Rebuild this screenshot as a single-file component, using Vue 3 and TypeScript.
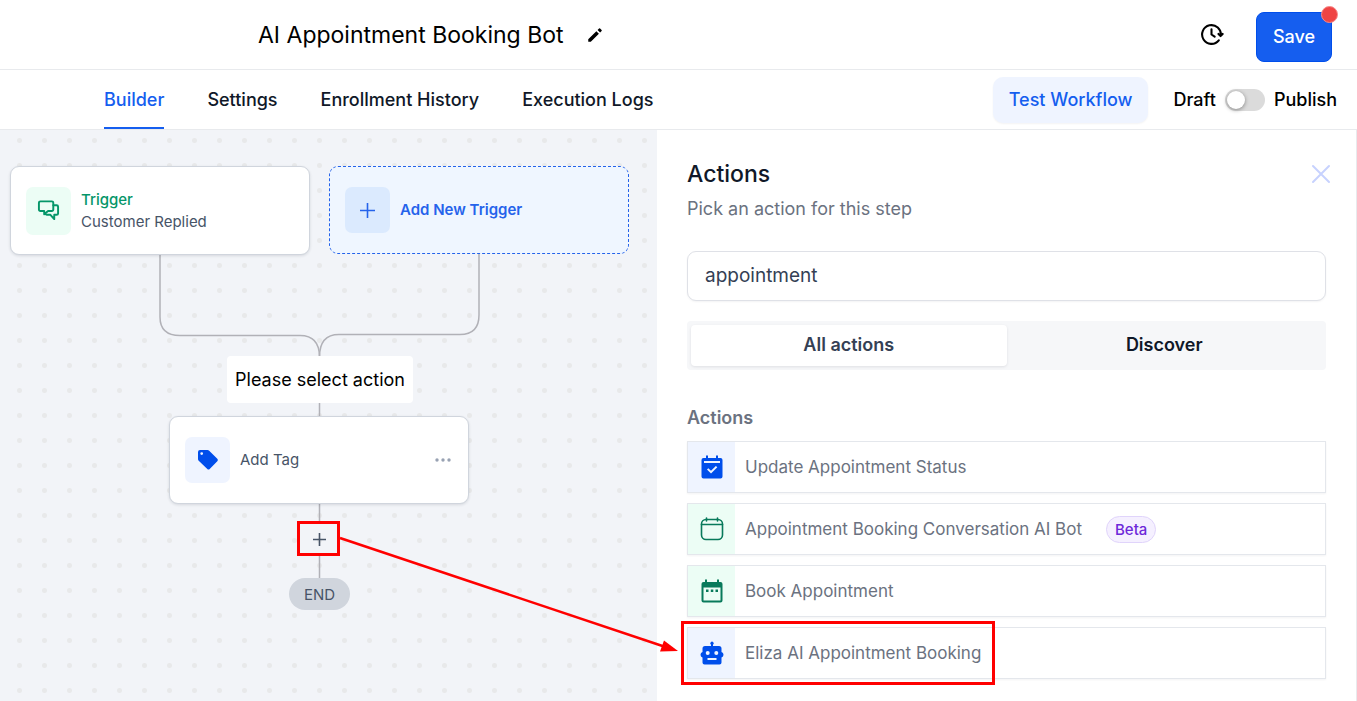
<script setup lang="ts">
import { ref } from 'vue'

type IconName = 'check' | 'outline' | 'dates' | 'robot'
interface ActionItem {
  label: string
  icon: IconName
  tone: 'blue' | 'green'
  beta?: boolean
}

const tabs = ['Builder', 'Settings', 'Enrollment History', 'Execution Logs']
const activeTab = ref('Builder')
const published = ref(false)
const query = ref('appointment')
const scope = ref('All actions')
const scopes = ['All actions', 'Discover']

const actions: ActionItem[] = [
  { label: 'Update Appointment Status', icon: 'check', tone: 'blue' },
  { label: 'Appointment Booking Conversation AI Bot', icon: 'outline', tone: 'green', beta: true },
  { label: 'Book Appointment', icon: 'dates', tone: 'green' },
  { label: 'Eliza AI Appointment Booking', icon: 'robot', tone: 'blue' },
]
</script>

<template>
  <div class="app">
    <header class="topbar">
      <div class="title-group">
        <h1>AI Appointment Booking Bot</h1>
        <button class="icon-btn" aria-label="Rename workflow">
          <svg width="18" height="18" viewBox="0 0 24 24"><path d="M3 17.600V21h3.400L17.200 10.300l-3.400-3.400L3 17.600zM20.800 6.600a1 1 0 0 0 0-1.400l-2-2a1 1 0 0 0-1.400 0l-2 2 3.400 3.400z" /></svg>
        </button>
      </div>
      <div class="top-actions">
        <button class="icon-btn" aria-label="Version history">
          <svg width="25" height="25" viewBox="0 0 24 24" fill="none" stroke="#000" stroke-width="2" stroke-linecap="round" stroke-linejoin="round">
            <path d="M22.700 11.500l-2 2-2-2M20.945 13A9 9 0 1 0 19 17.657M12 7v5l3 2" />
          </svg>
        </button>
        <button class="save">Save<span class="dot"></span></button>
      </div>
    </header>

    <div class="subbar">
      <nav class="tabs" aria-label="Workflow">
        <a v-for="t in tabs" :key="t" href="#" :class="{ active: t === activeTab }" @click.prevent="activeTab = t">{{ t }}</a>
      </nav>
      <div class="publish">
        <button class="test">Test Workflow</button>
        <label class="switch">
          <span>Draft</span>
          <input v-model="published" type="checkbox" role="switch" />
          <span>Publish</span>
        </label>
      </div>
    </div>

    <main class="workspace">
      <section class="canvas" aria-label="Workflow canvas">
        <svg class="edges" width="657" height="480" fill="none" stroke="#b1b1b7" stroke-width="1.5">
          <path d="M160 125V187Q160 205.5 180 205.5H300Q319.5 205.5 319.5 227" />
          <path d="M479 124V185Q479 204.500 460 204.500H339Q319.500 204.500 319.500 227" />
          <path d="M319.500 272V287M319.500 373V392M319.500 425V449" />
        </svg>

        <article class="node trigger">
          <span class="tile green">
            <svg width="23" height="23" viewBox="0 0 24 24" fill="none" stroke="#059669" stroke-width="2" stroke-linejoin="round" stroke-linecap="round">
              <path d="M3.500 2.500h12a1.500 1.500 0 0 1 1.500 1.500v7a1.500 1.500 0 0 1-1.500 1.500h-4L7.500 16v-3.500h-4A1.500 1.500 0 0 1 2 11V4a1.500 1.500 0 0 1 1.500-1.500z" />
              <path d="M17 6.500h3.500A1.500 1.500 0 0 1 22 8v7a1.500 1.500 0 0 1-1.500 1.500H18V21l-4-4.500h-3.500l-2.200-1" />
            </svg>
          </span>
          <div class="node-text"><strong>Trigger</strong><span>Customer Replied</span></div>
        </article>

        <button class="node add-trigger">
          <span class="tile sky">
            <svg width="15" height="15" viewBox="0 0 15 15" stroke="#2563eb" stroke-width="1.600"><path d="M7.500 0v15M0 7.500h15" /></svg>
          </span>
          Add New Trigger
        </button>

        <div class="hint">Please select action</div>

        <article class="node add-tag">
          <span class="tile blue">
            <svg width="24" height="24" viewBox="0 0 24 24" fill="#004eeb"><path fill-rule="evenodd" d="M4 2h7.500q1 0 1.700.7l8.100 8.100q1.300 1.200 0 2.400l-7.600 7.700q-1.200 1.200-2.400 0L2.700 12.700Q2 12 2 11V4q0-2 2-2zm1.700 2.200a1.400 1.400 0 1 0 0 2.800 1.400 1.400 0 0 0 0-2.800z" /></svg>
          </span>
          <span class="node-name">Add Tag</span>
          <button class="more" aria-label="More options">
            <svg width="16" height="4" viewBox="0 0 16 4" fill="#98a2b3"><circle cx="2" cy="2" r="1.700" /><circle cx="8" cy="2" r="1.700" /><circle cx="14" cy="2" r="1.700" /></svg>
          </button>
        </article>

        <button class="insert" aria-label="Add step">
          <svg width="13" height="13" viewBox="0 0 13 13" stroke="#475467" stroke-width="1.600"><path d="M6.500 0v13M0 6.500h13" /></svg>
        </button>
        <div class="end">END</div>
      </section>

      <aside class="panel">
        <div class="panel-head">
          <h2>Actions</h2>
          <button class="icon-btn" aria-label="Close panel">
            <svg width="20" height="20" viewBox="0 0 20 20" stroke="#c7d2fe" stroke-width="2" stroke-linecap="round"><path d="M2 2l16 16M18 2L2 18" /></svg>
          </button>
        </div>
        <p class="lead">Pick an action for this step</p>
        <input v-model="query" class="search" type="text" aria-label="Search actions" />
        <div class="segmented">
          <button v-for="s in scopes" :key="s" :class="{ selected: s === scope }" @click="scope = s">{{ s }}</button>
        </div>
        <h3>Actions</h3>
        <ul class="list">
          <li v-for="a in actions" :key="a.label">
            <button class="action">
              <span class="action-icon" :class="a.tone">
                <svg v-if="a.icon === 'check'" width="24" height="26" viewBox="0 0 24 26" fill="#004eeb">
                  <path fill-rule="evenodd" d="M6 1.500h2V4h8V1.500h2V4h2.500q2 0 2 2v16.500q0 2-2 2h-17q-2 0-2-2V6q0-2 2-2H6zM4 7v2h16V7zM8.300 14.200L7 15.600l4 4 6.300-6.300-1.400-1.400-4.900 4.900z" />
                </svg>
                <svg v-else-if="a.icon === 'outline'" width="24" height="26" viewBox="0 0 24 26" fill="none" stroke="#087a5b" stroke-width="1.600" stroke-linecap="round">
                  <rect x="1.500" y="3.500" width="21" height="20" rx="4.500" /><path d="M1.500 8.500h21M6.500 2v3M17.500 2v3" />
                </svg>
                <svg v-else-if="a.icon === 'dates'" width="24" height="26" viewBox="0 0 24 26" fill="#087a5b">
                  <path fill-rule="evenodd" d="M5 1.500h2V4h10V1.500h2V4h1.500q2 0 2 2v16.500q0 2-2 2h-17q-2 0-2-2V6q0-2 2-2H5zM3.500 9.500v13h17v-13zM6 11.500h2.500V14H6zM10.800 11.500h2.500V14h-2.500zM15.500 11.500H18V14h-2.500z" />
                </svg>
                <svg v-else width="24" height="26" viewBox="0 0 24 26" fill="#004eeb">
                  <path fill-rule="evenodd" d="M11 6V4.800a1.700 1.700 0 1 1 2 0V6h6q2.500 0 2.500 2.500V12q2 .5 2 2.700t-2 2.700v5.100q0 2-2 2h-15q-2 0-2-2v-5.100q-2-.5-2-2.700t2-2.700V8.500Q2.500 6 5 6zM7.700 11a2 2 0 1 0 0 4 2 2 0 0 0 0-4zM16.300 11a2 2 0 1 0 0 4 2 2 0 0 0 0-4zM7.500 18v2h9v-2z" />
                </svg>
              </span>
              <span class="action-name">{{ a.label }}</span>
              <span v-if="a.beta" class="beta">Beta</span>
            </button>
          </li>
        </ul>
      </aside>

      <svg class="callout" width="1000" height="571" fill="none" stroke="#f00" stroke-width="3" aria-hidden="true">
        <rect x="298.500" y="392.500" width="40" height="32" />
        <rect x="682.500" y="492.500" width="311" height="61" />
        <path d="M340 408L664 516.500" stroke-width="2.500" />
        <path d="M678 521L660 521.500L664 510.500Z" fill="#f00" stroke="none" />
      </svg>
    </main>
  </div>
</template>

<style>
body {
  margin: 0;
}
</style>

<style scoped>
* {
  box-sizing: border-box;
}
.app {
  min-height: 100vh;
  display: flex;
  flex-direction: column;
  font-family: Inter, "Liberation Sans", sans-serif;
  color: #000;
  background: #fff;
}
button {
  font: inherit;
  color: inherit;
  border: 0;
  padding: 0;
  background: none;
  cursor: pointer;
}
h1, h2, h3, p, ul {
  margin: 0;
  padding: 0;
}
svg {
  display: block;
}
.topbar {
  height: 70px;
  display: flex;
  justify-content: space-between;
  border-bottom: 1px solid #e8eaed;
  padding: 0 25px 0 258px;
}
.title-group {
  display: flex;
  align-items: center;
  gap: 22px;
}
h1 {
  font-size: 23px;
  line-height: 30px;
  font-weight: 400;
}
.top-actions {
  display: flex;
  align-items: center;
  gap: 32px;
}
.save {
  position: relative;
  width: 76px;
  height: 50px;
  margin-top: 4px;
  border-radius: 8px;
  border: 1px solid #004eeb;
  background: #155eef;
  color: #fff;
  font-size: 18px;
  font-weight: 500;
}
.dot {
  position: absolute;
  top: -7px;
  right: -7px;
  width: 17px;
  height: 17px;
  border-radius: 50%;
  background: #ef4444;
  border: 1px solid #f78a8a;
}
.subbar {
  height: 60px;
  display: flex;
  justify-content: space-between;
  border-bottom: 1px solid #e8eaed;
  padding: 0 20px 0 104px;
  font-size: 18px;
  font-weight: 500;
}
.tabs {
  display: flex;
  gap: 43px;
}
.tabs a {
  display: flex;
  align-items: center;
  color: #101828;
  text-decoration: none;
  border-bottom: 2px solid transparent;
  padding-top: 2px;
}
.tabs a.active {
  color: #155eef;
  border-color: #155eef;
}
.publish,
.switch {
  display: flex;
  align-items: center;
}
.publish {
  gap: 25px;
}
.switch {
  gap: 9px;
}
.test {
  height: 46px;
  padding: 0 16px;
  border-radius: 10px;
  background: #eff4ff;
  color: #155eef;
  box-shadow: 0 1px 2px #1018280d;
}
.switch input {
  appearance: none;
  width: 40px;
  height: 22px;
  margin: 0;
  padding: 2px;
  border-radius: 12px;
  background: #dbdbdb;
}
.switch input::before {
  content: "";
  display: block;
  width: 18px;
  height: 18px;
  border-radius: 50%;
  background: #fff;
  box-shadow: 0 1px 4px #0006;
}
.switch input:checked {
  background: #155eef;
}
.switch input:checked::before {
  margin-left: auto;
}
.workspace {
  position: relative;
  flex: 1;
  display: grid;
  grid-template-columns: 657fr 700fr;
}
.canvas {
  position: relative;
  overflow: hidden;
  background: #f2f4f8 radial-gradient(circle, #e8e9ea 2px, #e8e9ea00 3px) 7px -2px / 25px 25px;
}
.edges,
.node,
.hint,
.insert,
.end,
.callout {
  position: absolute;
}
.edges,
.callout {
  left: 0;
  top: 0;
  pointer-events: none;
}
.node {
  width: 300px;
  height: 89px;
  display: flex;
  align-items: center;
  gap: 10px;
  padding: 0 15px;
  background: #fff;
  border: 1px solid #d0d5dd;
  border-radius: 9px;
  font-size: 15px;
  line-height: 22px;
  color: #475467;
  box-shadow: 0 1px 3px #1018281f;
}
.trigger {
  left: 10px;
  top: 36px;
}
.add-trigger {
  left: 329px;
  top: 36px;
  height: 88px;
  background: #eff6ff;
  border: 1px dashed #2563eb;
  color: #2563eb;
  font-weight: 600;
  box-shadow: none;
}
.add-tag {
  left: 169px;
  top: 286px;
  height: 88px;
}
.tile {
  width: 45px;
  height: 46px;
  border-radius: 7px;
  display: grid;
  place-items: center;
}
.trigger .tile {
  height: 48px;
}
.green {
  background: #ecfdf5;
}
.sky {
  background: #dbeafe;
}
.blue {
  background: #eff4ff;
}
.node-text {
  display: flex;
  flex-direction: column;
}
.node-text strong {
  color: #059669;
  font-weight: 500;
}
.node-name {
  flex: 1;
}
.more {
  padding: 6px 2px;
}
.hint {
  left: 227px;
  top: 226px;
  width: 186px;
  height: 47px;
  display: grid;
  place-items: center;
  background: #fff;
  border-radius: 4px;
  font-size: 18px;
}
.insert {
  left: 300px;
  top: 394px;
  width: 39px;
  height: 31px;
  display: grid;
  place-items: center;
}
.end {
  left: 289px;
  top: 448px;
  width: 61px;
  height: 32px;
  border-radius: 16px;
  display: grid;
  place-items: center;
  background: #d0d5dd;
  color: #475467;
  font-size: 15px;
}
.panel {
  min-width: 0;
  padding: 29px 30px 20px;
  border-right: 1px solid #e8eaed;
}
.panel-head {
  display: flex;
  justify-content: space-between;
  align-items: center;
  margin-right: -5px;
}
h2 {
  font-size: 23px;
  line-height: 30px;
  font-weight: 500;
  color: #101828;
}
.lead {
  margin-top: 8px;
  font-size: 18px;
  line-height: 24px;
  color: #6b7280;
}
.search {
  display: block;
  width: 100%;
  height: 50px;
  margin-top: 30px;
  padding: 0 17px 2px;
  border: 1px solid #dfe1e7;
  border-radius: 9px;
  background: #fff;
  color: #344054;
  font: 19px Inter, "Liberation Sans", sans-serif;
  box-shadow: 0 1px 2px #1018280d;
}
.segmented {
  display: flex;
  margin-top: 20px;
  padding: 4px;
  height: 49px;
  background: #f6f7f9;
  border-radius: 4px;
}
.segmented button {
  flex: 1;
  padding-bottom: 2px;
  border-radius: 4px;
  font-size: 18px;
  font-weight: 600;
  color: #101828;
}
.segmented .selected {
  background: #fff;
  color: #344054;
  box-shadow: 0 1px 3px #1018281a;
}
h3 {
  margin-top: 36px;
  font-size: 18px;
  line-height: 24px;
  font-weight: 600;
  color: #6b7280;
}
.list {
  list-style: none;
  margin-top: 11px;
  display: flex;
  flex-direction: column;
  gap: 10px;
}
.action {
  width: 100%;
  height: 52px;
  display: flex;
  align-items: center;
  border: 1px solid #e4e7ec;
  font-size: 17px;
  color: #6b7280;
  box-shadow: 0 1px 2px #1018280d;
}
.action-icon {
  width: 47px;
  height: 50px;
  display: grid;
  place-items: center;
}
.action-name {
  margin-left: 10px;
}
.beta {
  margin-left: 24px;
  padding: 0 8px;
  border: 1px solid #e0d4fb;
  border-radius: 14px;
  background: #f5f0ff;
  color: #6d28d9;
  font-size: 15px;
  line-height: 25px;
  font-weight: 500;
}
</style>
